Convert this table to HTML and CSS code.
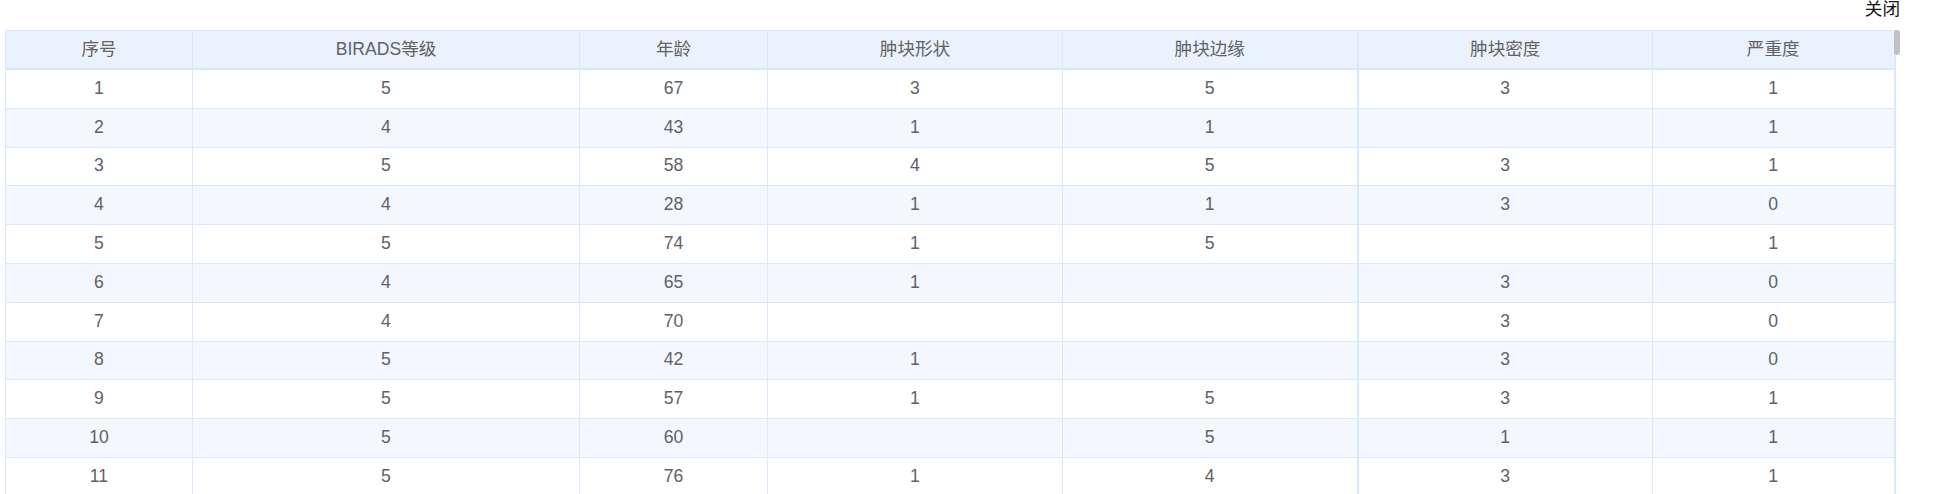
FILE: index.html
```html
<!DOCTYPE html>
<html lang="zh-CN">
<head>
<meta charset="utf-8">
<title>数据表</title>
<link rel="stylesheet" href="styles.css">
</head>
<body>
<div class="page">
  <div class="topbar"><span class="close">关闭</span></div>
  <div class="body">
    <div class="table-wrap">
      <table class="grid">
        <colgroup>
          <col class="c1"><col class="c2"><col class="c3"><col class="c4"><col class="c5"><col class="c6"><col class="c7">
        </colgroup>
        <thead>
          <tr><th>序号</th><th>BIRADS等级</th><th>年龄</th><th>肿块形状</th><th class="thick">肿块边缘</th><th>肿块密度</th><th>严重度</th></tr>
        </thead>
        <tbody>
          <tr><td>1</td><td>5</td><td>67</td><td>3</td><td class="thick">5</td><td>3</td><td>1</td></tr>
          <tr class="alt"><td>2</td><td>4</td><td>43</td><td>1</td><td class="thick">1</td><td></td><td>1</td></tr>
          <tr><td>3</td><td>5</td><td>58</td><td>4</td><td class="thick">5</td><td>3</td><td>1</td></tr>
          <tr class="alt"><td>4</td><td>4</td><td>28</td><td>1</td><td class="thick">1</td><td>3</td><td>0</td></tr>
          <tr><td>5</td><td>5</td><td>74</td><td>1</td><td class="thick">5</td><td></td><td>1</td></tr>
          <tr class="alt"><td>6</td><td>4</td><td>65</td><td>1</td><td class="thick"></td><td>3</td><td>0</td></tr>
          <tr><td>7</td><td>4</td><td>70</td><td></td><td class="thick"></td><td>3</td><td>0</td></tr>
          <tr class="alt"><td>8</td><td>5</td><td>42</td><td>1</td><td class="thick"></td><td>3</td><td>0</td></tr>
          <tr><td>9</td><td>5</td><td>57</td><td>1</td><td class="thick">5</td><td>3</td><td>1</td></tr>
          <tr class="alt"><td>10</td><td>5</td><td>60</td><td></td><td class="thick">5</td><td>1</td><td>1</td></tr>
          <tr><td>11</td><td>5</td><td>76</td><td>1</td><td class="thick">4</td><td>3</td><td>1</td></tr>
        </tbody>
      </table>
    </div>
    <div class="scrollbar"><div class="thumb"></div></div>
  </div>
</div>
</body>
</html>
```
FILE: styles.css
```css
html, body {
  margin: 0;
  padding: 0;
  background: #ffffff;
  overflow: hidden;
}

.page {
  padding: 0 33px 0 5px;
  font-family: "Liberation Sans", "Noto Sans CJK SC", Arial, sans-serif;
}

.topbar {
  height: 30px;
  text-align: right;
}

.close {
  font-size: 17.6px;
  line-height: 20px;
  color: #111;
  display: inline-block;
  margin-top: -1px;
}

.body {
  display: flex;
  align-items: flex-start;
}

.table-wrap {
  width: 1889px;
  flex: none;
}

.grid {
  width: 1889px;
  table-layout: fixed;
  border-collapse: collapse;
  font-size: 17.6px;
  color: #606266;
  border-right: 2px solid #d9e8fb;
}

.c1 { width: 187px; }
.c2 { width: 387px; }
.c3 { width: 188px; }
.c4 { width: 295px; }
.c5 { width: 295px; }
.c6 { width: 295px; }
.c7 { width: 242px; }

.grid th,
.grid td {
  border: 1px solid #dbe9fb;
  padding: 0;
  text-align: center;
  vertical-align: middle;
  font-weight: normal;
  line-height: 20px;
}

.grid th {
  height: 36px;
  background: #eaf3fd;
  border-bottom: 2px solid #d6e7fb;
  padding-bottom: 1px;
}

.grid td {
  height: 35.8px;
  padding-bottom: 2px;
  background: #ffffff;
}

.grid tr.alt td {
  background: #f4f8fe;
}

.grid .thick {
  border-right: 2px solid #d9e8fb;
}

.scrollbar {
  width: 6px;
  flex: none;
}

.thumb {
  height: 25px;
  background: #c1c1c1;
  border-radius: 3px;
}
```
